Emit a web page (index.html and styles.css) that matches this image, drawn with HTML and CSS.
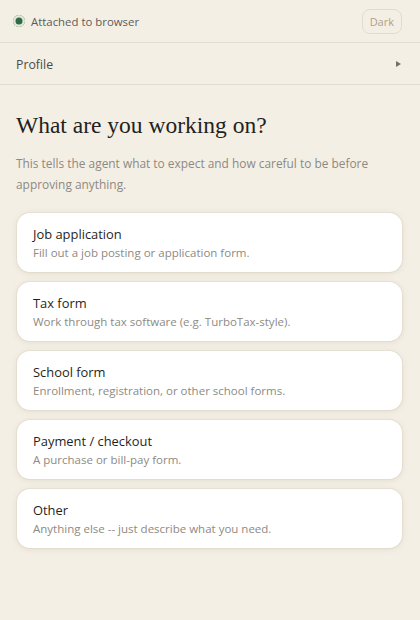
FILE: index.html
```html
<!DOCTYPE html>
<html>
<head>
<meta charset="utf-8">
<link rel="stylesheet" href="styles.css">
</head>
<body>
<div class="app">
  <header class="topbar">
    <div class="status">
      <span class="dot"></span>
      <span class="status-text">Attached to browser</span>
    </div>
    <button class="theme-btn">Dark</button>
  </header>
  <div class="profile-row">
    <span class="profile-label">Profile</span>
    <span class="caret"></span>
  </div>
  <main class="content">
    <h1 class="title">What are you working on?</h1>
    <p class="lead">This tells the agent what to expect and how careful to be before approving anything.</p>
    <div class="options">
      <div class="option">
        <div class="opt-title">Job application</div>
        <div class="opt-desc">Fill out a job posting or application form.</div>
      </div>
      <div class="option">
        <div class="opt-title">Tax form</div>
        <div class="opt-desc">Work through tax software (e.g. TurboTax-style).</div>
      </div>
      <div class="option">
        <div class="opt-title">School form</div>
        <div class="opt-desc">Enrollment, registration, or other school forms.</div>
      </div>
      <div class="option">
        <div class="opt-title">Payment / checkout</div>
        <div class="opt-desc">A purchase or bill-pay form.</div>
      </div>
      <div class="option">
        <div class="opt-title">Other</div>
        <div class="opt-desc">Anything else -- just describe what you need.</div>
      </div>
    </div>
  </main>
</div>
</body>
</html>
```

FILE: styles.css
```css
* { box-sizing: border-box; }
html, body {
  margin: 0;
  padding: 0;
  background: #f4efe5;
}
body {
  font-family: "Open Sans", "Noto Sans", sans-serif;
  color: #2a2a2a;
}
.app {
  width: 420px;
  min-height: 620px;
  background: #f4efe5;
}
.topbar {
  height: 43px;
  display: flex;
  align-items: center;
  justify-content: space-between;
  padding: 0 18px 0 13px;
  border-bottom: 1px solid #e3ddd1;
}
.status {
  display: flex;
  align-items: center;
  gap: 6px;
}
.dot {
  width: 12px;
  height: 12px;
  border-radius: 50%;
  background: #2f6b45;
  box-shadow: inset 0 0 0 2.5px #e4e6d9;
}
.status-text {
  font-size: 11.4px;
  color: #5c5c58;
}
.theme-btn {
  font-family: inherit;
  font-size: 11px;
  color: #b0a08a;
  background: transparent;
  border: 1px solid #e2dccf;
  border-radius: 8px;
  height: 25px;
  padding: 0 7px;
}
.profile-row {
  height: 42px;
  display: flex;
  align-items: center;
  justify-content: space-between;
  padding: 1px 19px 0 16px;
  border-bottom: 1px solid #e3ddd1;
}
.profile-label {
  font-size: 12.3px;
  color: #4a4a48;
}
.caret {
  width: 0;
  height: 0;
  border-top: 3px solid transparent;
  border-bottom: 3px solid transparent;
  border-left: 5px solid #6f7468;
}
.content {
  padding: 25px 18px 24px 16px;
}
.title {
  margin: 0;
  font-family: "Liberation Serif", "Times New Roman", serif;
  font-weight: normal;
  font-size: 23.5px;
  line-height: 30px;
  color: #222220;
}
.lead {
  margin: 13px 0 0;
  font-size: 11.9px;
  line-height: 21px;
  color: #8c8a82;
}
.options {
  margin: 18px 0 0 1px;
  display: flex;
  flex-direction: column;
  gap: 10px;
}
.option {
  background: #ffffff;
  border-radius: 13px;
  height: 59px;
  padding: 12px 16px 0;
  box-shadow: 0 1px 6px rgba(120, 100, 70, 0.15), 0 0 0 1px rgba(200, 190, 170, 0.16);
}
.opt-title {
  font-size: 12.9px;
  line-height: 19px;
  color: #1f1f1f;
}
.opt-desc {
  font-size: 11.5px;
  line-height: 18px;
  color: #8e8a84;
}
```
